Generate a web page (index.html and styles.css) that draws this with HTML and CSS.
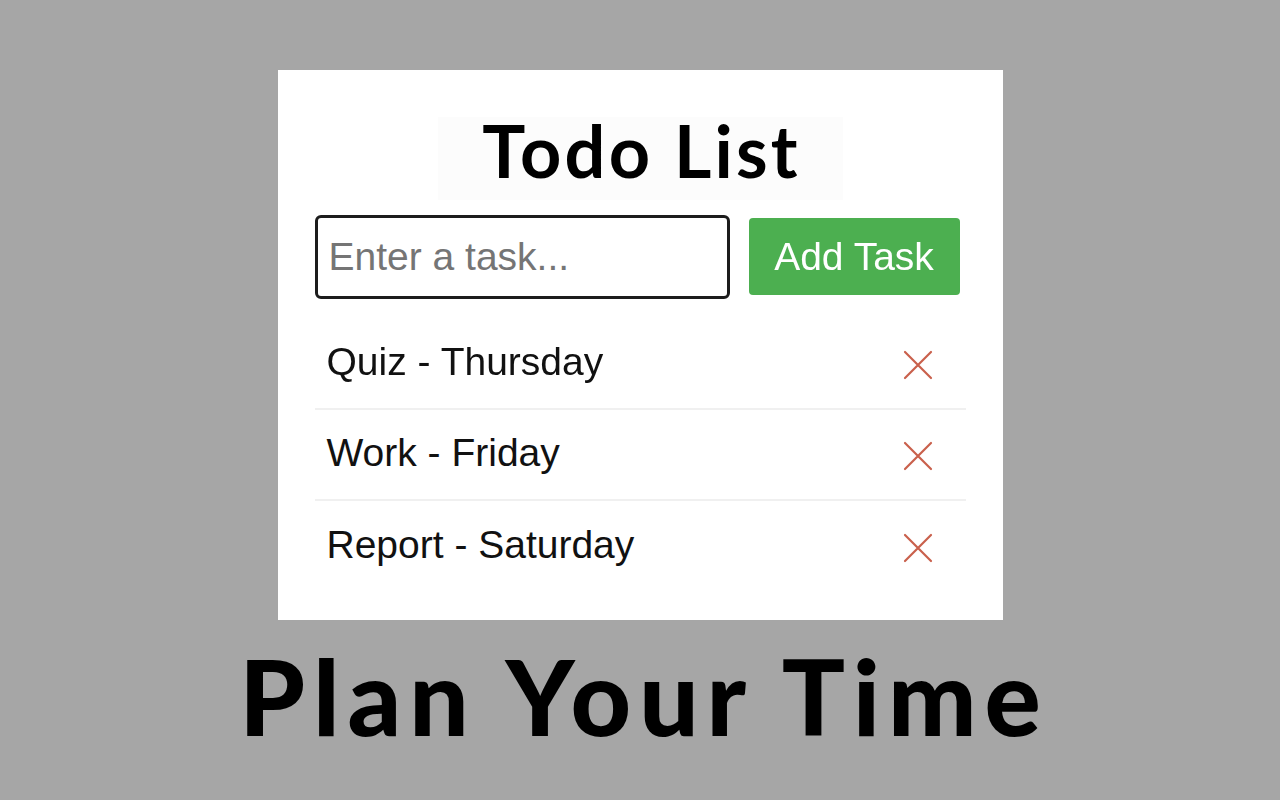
FILE: index.html
```html
<!DOCTYPE html>
<html lang="en">
<head>
<meta charset="utf-8">
<title>Todo List</title>
<link rel="stylesheet" href="styles.css">
</head>
<body>
<div class="page">
  <div class="card">
    <h1 class="title">Todo List</h1>
    <div class="form">
      <input class="task-input" type="text" placeholder="Enter a task..." autofocus>
      <button class="add-btn">Add Task</button>
    </div>
    <ul class="tasks">
      <li class="task"><span class="task-text">Quiz - Thursday</span>
        <svg class="del" viewBox="0 0 30 30" width="30" height="30"><path d="M2 2 L28 28 M28 2 L2 28" stroke="#c9604c" stroke-width="2.2" stroke-linecap="round" fill="none"/></svg></li>
      <li class="task"><span class="task-text">Work - Friday</span>
        <svg class="del" viewBox="0 0 30 30" width="30" height="30"><path d="M2 2 L28 28 M28 2 L2 28" stroke="#c9604c" stroke-width="2.2" stroke-linecap="round" fill="none"/></svg></li>
      <li class="task"><span class="task-text">Report - Saturday</span>
        <svg class="del" viewBox="0 0 30 30" width="30" height="30"><path d="M2 2 L28 28 M28 2 L2 28" stroke="#c9604c" stroke-width="2.2" stroke-linecap="round" fill="none"/></svg></li>
    </ul>
  </div>
  <div class="tagline">Plan Your Time</div>
</div>
</body>
</html>
```
FILE: styles.css
```css
html, body {
  margin: 0;
  padding: 0;
  background: #a6a6a6;
}
.page {
  display: flex;
  flex-direction: column;
  align-items: center;
  padding-top: 70px;
}
.card {
  width: 725px;
  height: 550px;
  box-sizing: border-box;
  background: #ffffff;
  padding: 47px 37px 0;
}
.title {
  width: 405px;
  height: 83px;
  box-sizing: border-box;
  padding-top: 3px;
  margin: 0 auto;
  background: #fcfcfc;
  font-family: Lato, "Noto Sans", sans-serif;
  font-weight: 700;
  font-size: 72px;
  line-height: 60px;
  letter-spacing: 3.2px;
  text-indent: 3.2px;
  text-align: center;
  color: #000;
}
.form {
  display: flex;
  gap: 19px;
  margin-top: 15px;
  align-items: flex-start;
}
.task-input {
  width: 415px;
  height: 84px;
  box-sizing: border-box;
  border: 3px solid #1c1c1c;
  border-radius: 6px;
  padding: 0 11px;
  font-family: "Liberation Sans", Arial, sans-serif;
  font-size: 39px;
  color: #222;
  outline: none;
  caret-color: #222;
}
.task-input::placeholder {
  color: #757575;
}
.add-btn {
  width: 211px;
  height: 77px;
  margin-top: 3px;
  border: none;
  border-radius: 4px;
  background: #4caf50;
  color: #fff;
  font-family: "Liberation Sans", Arial, sans-serif;
  font-size: 39px;
  padding: 0;
}
.tasks {
  list-style: none;
  margin: 20px 0 0;
  padding: 0;
  width: 651px;
}
.task {
  display: flex;
  align-items: center;
  justify-content: space-between;
  height: 91px;
  box-sizing: border-box;
  padding: 0 33px 0 12px;
  border-bottom: 2px solid #f0f0f0;
}
.task:last-child {
  border-bottom: none;
}
.task-text {
  font-family: "Liberation Sans", Arial, sans-serif;
  font-size: 39px;
  color: #111;
  margin-top: -4px;
}
.del {
  display: block;
  margin-top: 2px;
}
.tagline {
  margin-top: 23px;
  font-family: Lato, "Noto Sans", sans-serif;
  font-weight: 900;
  font-size: 105px;
  line-height: 1;
  letter-spacing: 8px;
  text-indent: 8px;
  color: #000;
}
```
